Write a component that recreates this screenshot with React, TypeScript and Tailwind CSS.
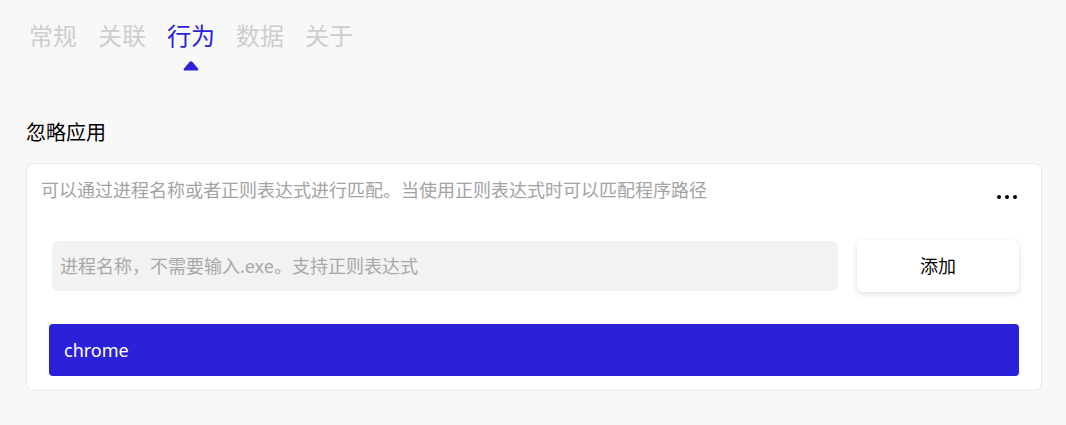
import { useState } from 'react'

const tabs = ['常规', '关联', '行为', '数据', '关于']

const font = "font-['Noto_Sans','Noto_Sans_CJK_SC',sans-serif]"

export default function App() {
    const [active, setActive] = useState(2)
    const [value, setValue] = useState('')
    const [apps, setApps] = useState<string[]>(['chrome'])

    const addApp = () => {
        const v = value.trim()
        if (!v) return
        setApps([...apps, v])
        setValue('')
    }

    return (
        <div className={`w-[1066px] h-[425px] bg-[#f8f8f8] overflow-hidden ${font}`}>
            {/* tabs */}
            <div className="flex gap-[21px] pl-[29px] pt-[20px]">
                {tabs.map((t, i) => (
                    <button
                        key={t}
                        onClick={() => setActive(i)}
                        className={`flex flex-col items-center text-[24px] leading-[32px] ${i === active ? 'text-[#2b21d9]' : 'text-[#cdcdcd]'}`}
                    >
                        {t}
                        <svg
                            width="16"
                            height="10"
                            viewBox="0 0 16 10"
                            className={`mt-[9px] ${i === active ? '' : 'invisible'}`}
                        >
                            <path d="M6.3 1.2 Q8 -0.6 9.7 1.2 L15 7.6 Q16 9.6 13.8 9.6 L2.2 9.6 Q0 9.6 1 7.6 Z" fill="#2b21d9" />
                        </svg>
                    </button>
                ))}
            </div>

            <div className="pl-[26px] mt-[48px] text-[20px] leading-[28px] text-black">忽略应用</div>

            {/* card */}
            <div className="ml-[26px] mt-[16px] w-[1016px] bg-white border border-[#e8e8e8] rounded-[8px]">
                <div className="flex items-start justify-between pl-[14px] pr-[24px] pt-[13px]">
                    <p className="text-[18px] leading-[26px] text-[#a3a3a3]">
                        可以通过进程名称或者正则表达式进行匹配。当使用正则表达式时可以匹配程序路径
                    </p>
                    <div className="flex gap-[4px] mt-[18px]">
                        <span className="w-[4px] h-[4px] rounded-full bg-black" />
                        <span className="w-[4px] h-[4px] rounded-full bg-black" />
                        <span className="w-[4px] h-[4px] rounded-full bg-black" />
                    </div>
                </div>

                <div className="flex items-center gap-[19px] pl-[25px] pr-[22px] mt-[37px]">
                    <input
                        value={value}
                        onChange={e => setValue(e.target.value)}
                        placeholder="进程名称，不需要输入.exe。支持正则表达式"
                        className="flex-1 h-[50px] px-[8px] rounded-[6px] bg-[#f2f2f2] text-[18px] text-black placeholder:text-[#a8a8a8] outline-none"
                    />
                    <button
                        onClick={addApp}
                        className="w-[162px] h-[52px] rounded-[6px] bg-white text-[18px] text-black shadow-[0_2px_6px_rgba(0,0,0,0.13)]"
                    >
                        添加
                    </button>
                </div>

                <div className="flex flex-col gap-[8px] px-[22px] mt-[32px] mb-[14px]">
                    {apps.map(a => (
                        <div
                            key={a}
                            className="h-[52px] flex items-center pl-[15px] rounded-[4px] bg-[#2b21d9] text-white text-[18px]"
                        >
                            {a}
                        </div>
                    ))}
                </div>
            </div>
        </div>
    )
}
